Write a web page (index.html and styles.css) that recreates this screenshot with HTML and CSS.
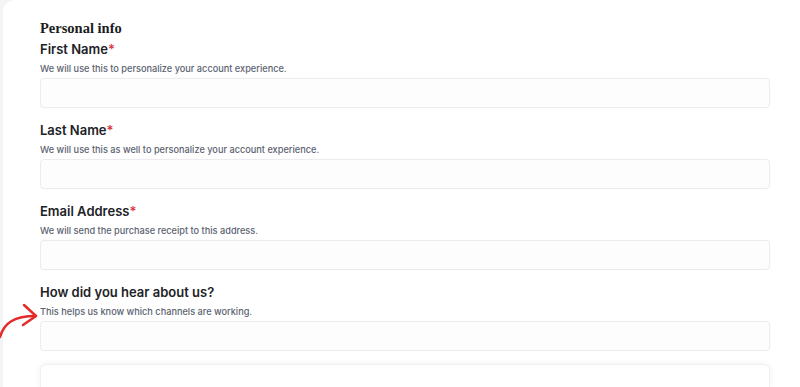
FILE: index.html
```html
<!DOCTYPE html>
<html lang="en">
<head>
    <meta charset="UTF-8">
    <meta name="viewport" content="width=device-width, initial-scale=1.0">
    <title>Personal info</title>
    <link rel="stylesheet" href="styles.css">
</head>
<body>
    <div class="card">
        <h2>Personal info</h2>

        <!-- First name -->
        <div class="field">
            <label for="firstName">First Name<span class="req">*</span></label>
            <p class="help">We will use this to personalize your account experience.</p>
            <input type="text" id="firstName">
        </div>

        <!-- Last name -->
        <div class="field">
            <label for="lastName">Last Name<span class="req">*</span></label>
            <p class="help">We will use this as well to personalize your account experience.</p>
            <input type="text" id="lastName">
        </div>

        <!-- Email -->
        <div class="field">
            <label for="email">Email Address<span class="req">*</span></label>
            <p class="help">We will send the purchase receipt to this address.</p>
            <input type="email" id="email">
        </div>

        <!-- Referral -->
        <div class="field">
            <label for="source">How did you hear about us?</label>
            <p class="help">This helps us know which channels are working.</p>
            <input type="text" id="source">
            <svg class="arrow" width="40" height="48" viewBox="0 0 40 48">
                <path d="M0 45 C 4 31, 14 24, 36 24" fill="none" stroke="#e42a2a" stroke-width="2.5" stroke-linecap="round"/>
                <path d="M24 13 L36 24 L23 33" fill="none" stroke="#e42a2a" stroke-width="2.5" stroke-linecap="round" stroke-linejoin="round"/>
            </svg>
        </div>

        <div class="next-box"></div>
    </div>
</body>
</html>
```

FILE: styles.css
```css
body {
    margin: 0;
    padding: 0;
    background-color: #f4f4f6;
    font-family: Inter, "Noto Sans", sans-serif;
    color: #1f1f23;
    height: 387px;
    overflow: hidden;
}
.card {
    margin-left: 3px;
    background-color: #ffffff;
    border-radius: 12px 0 0 0;
    padding: 18px 30px 0 37px;
}
.card h2 {
    margin: 0 0 1px 0;
    font-family: "Liberation Serif", serif;
    font-size: 14.5px;
    line-height: 20px;
    font-weight: bold;
    color: #1c1c22;
}
.field {
    position: relative;
    display: flex;
    flex-direction: column;
    margin-bottom: 12px;
}
.field label {
    font-size: 13px;
    font-weight: 600;
    line-height: 20px;
    color: #222226;
}
.field .req {
    color: #d9363e;
}
.field .help {
    margin: 3px 0 0 0;
    font-size: 9.2px;
    font-weight: 500;
    line-height: 14px;
    color: #5b6270;
}
.field input {
    margin-top: 2px;
    height: 30px;
    box-sizing: border-box;
    border: 1px solid #ececee;
    border-radius: 4px;
    background-color: #fdfdfd;
    box-shadow: 0 0 1px rgba(0, 0, 0, 0.04);
}
.arrow {
    position: absolute;
    left: -40px;
    top: 10px;
}
.next-box {
    margin-top: 13px;
    height: 24px;
    border: 1px solid #f0f0f2;
    border-bottom: none;
    border-radius: 6px 6px 0 0;
    box-shadow: 0 0 6px rgba(0, 0, 0, 0.06);
}
```
